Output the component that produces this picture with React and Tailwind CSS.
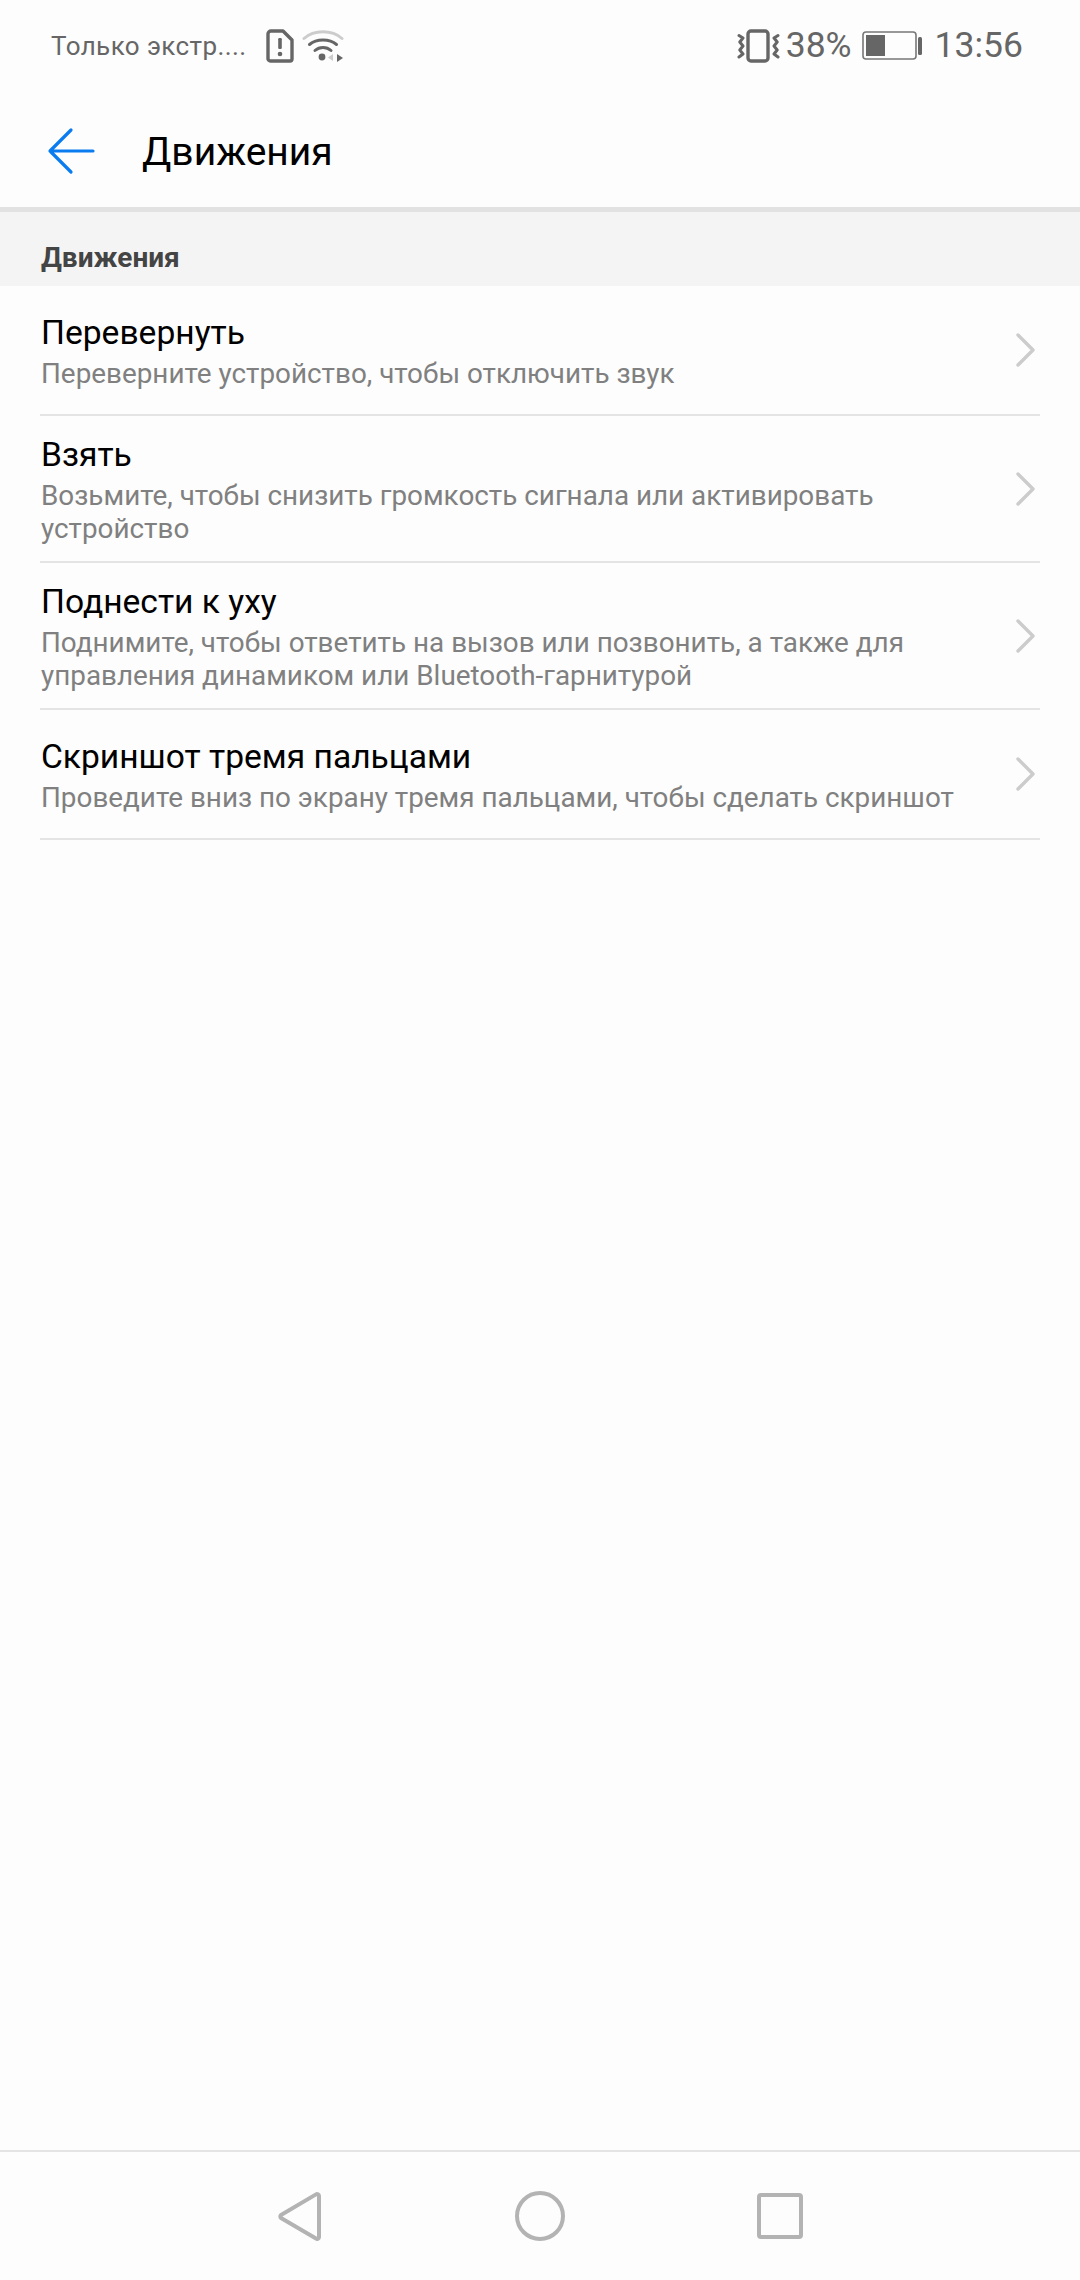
import React from "react";

const rows = [
  { title: "Перевернуть", sub: ["Переверните устройство, чтобы отключить звук"], h: "h-[130px]" },
  { title: "Взять", sub: ["Возьмите, чтобы снизить громкость сигнала или активировать", "устройство"], h: "h-[147px]" },
  { title: "Поднести к уху", sub: ["Поднимите, чтобы ответить на вызов или позвонить, а также для", "управления динамиком или Bluetooth-гарнитурой"], h: "h-[147px]" },
  { title: "Скриншот тремя пальцами", sub: ["Проведите вниз по экрану тремя пальцами, чтобы сделать скриншот"], h: "h-[130px]" },
];

function SimAlert() {
  return (
    <svg width="28" height="34" viewBox="0 0 28 34" className="block">
      <path d="M5 2h12l9 9v19a2 2 0 0 1-2 2H5a3 3 0 0 1-3-2V5a3 3 0 0 1 3-3z" fill="none" stroke="#666" strokeWidth="3.4" strokeLinejoin="round" />
      <rect x="12.2" y="9" width="3.6" height="11" rx="1.2" fill="#666" />
      <circle cx="14" cy="25" r="2.3" fill="#666" />
    </svg>
  );
}

function Wifi() {
  return (
    <svg width="42" height="34" viewBox="0 0 42 34" className="block">
      <path d="M2 9.5C12 0.5 30 0.5 40 9.5" fill="none" stroke="#ccc" strokeWidth="3" strokeLinecap="round" />
      <path d="M7.5 15.5C14.5 9.5 27.5 9.5 34.5 15.5" fill="none" stroke="#666" strokeWidth="3" strokeLinecap="round" />
      <path d="M13 21.5C17.5 17.5 24.5 17.5 29 21.5" fill="none" stroke="#666" strokeWidth="3" strokeLinecap="round" />
      <circle cx="20" cy="28" r="3.4" fill="#666" />
      <path d="M31 25v7l-5-3.5z" fill="#ccc" />
      <path d="M35 25v8l6-4z" fill="#666" />
    </svg>
  );
}

function Vibrate() {
  return (
    <svg width="43" height="34" viewBox="0 0 43 34" className="block">
      <rect x="11" y="2" width="20" height="30" rx="3" fill="none" stroke="#666" strokeWidth="3.4" />
      <path d="M2 6.5l4 2.5-3.2 4 3.2 4-3.2 4 3.2 4-4 3" fill="none" stroke="#666" strokeWidth="3" strokeLinecap="round" strokeLinejoin="round" />
      <path d="M41 6.5l-4 2.5 3.2 4-3.2 4 3.2 4-3.2 4 4 3" fill="none" stroke="#666" strokeWidth="3" strokeLinecap="round" strokeLinejoin="round" />
    </svg>
  );
}

function Battery() {
  return (
    <svg width="60" height="30" viewBox="0 0 60 30" className="block">
      <rect x="1" y="1" width="53" height="27" rx="3" fill="none" stroke="#777" strokeWidth="1.6" />
      <rect x="4" y="4" width="19" height="21" fill="#666" />
      <rect x="56" y="6" width="4" height="18" rx="1.5" fill="#666" />
    </svg>
  );
}

function Chevron() {
  return (
    <svg width="20" height="34" viewBox="0 0 20 34" className="block shrink-0">
      <path d="M2 2l15 15L2 32" fill="none" stroke="#ccc" strokeWidth="3.4" strokeLinecap="round" strokeLinejoin="round" />
    </svg>
  );
}

export default function App() {
  return (
    <div className="w-[1080px] h-[2280px] flex flex-col bg-[#fdfdfd] font-['Roboto',sans-serif] overflow-hidden">
      <div className="h-[92px] shrink-0 flex items-center justify-between pl-[51px] pr-[57px] text-[#666]">
        <div className="flex items-center">
          <span className="text-[26px] tracking-[0.4px]">Только экстр....</span>
          <span className="ml-[20px]"><SimAlert /></span>
          <span className="ml-[8px]"><Wifi /></span>
        </div>
        <div className="flex items-center">
          <Vibrate />
          <span className="ml-[6px] text-[35.5px]">38%</span>
          <span className="ml-[10px]"><Battery /></span>
          <span className="ml-[13px] text-[35.5px]">13:56</span>
        </div>
      </div>

      <div className="h-[115px] shrink-0 flex items-center pl-[47px]">
        <svg width="48" height="48" viewBox="0 0 48 48" className="block mt-[2px]">
          <path d="M46 24H3M24 3L3 24l21 21" fill="none" stroke="#0a7cf0" strokeWidth="3.2" strokeLinecap="round" strokeLinejoin="round" />
        </svg>
        <h1 className="ml-[47px] mt-[5px] text-[39px] text-black">Движения</h1>
      </div>

      <div className="h-[5px] shrink-0 bg-[#e2e2e2]" />
      <div className="h-[74px] shrink-0 bg-[#f4f4f4] pl-[41px] pt-[29px] text-[28px] leading-[34px] font-bold text-[#444]">Движения</div>

      <div className="mx-10">
        {rows.map(r => (
          <div key={r.title} className={`${r.h} flex items-center justify-between border-b-2 border-[#e4e4e4] pr-[4px]`}>
            <div className="pl-[1px] pt-[2px]">
              <div className="text-[33.6px] leading-[40px] text-black">{r.title}</div>
              <div className="mt-[4px] text-[27.85px] leading-[33px] text-[#808080]">
                {r.sub.map(s => <div key={s} className="whitespace-nowrap">{s}</div>)}
              </div>
            </div>
            <Chevron />
          </div>
        ))}
      </div>

      <div className="mt-auto h-[130px] shrink-0 border-t-2 border-[#e4e4e4] flex items-center justify-center">
        <svg width="43" height="49" viewBox="0 0 43 49" className="block mr-[194px]">
          <path d="M41 4v41a2 2 0 0 1-3 1.6L3 26a2 2 0 0 1 0-3L38 2.4A2 2 0 0 1 41 4z" fill="none" stroke="#b3b3b3" strokeWidth="4" strokeLinejoin="round" />
        </svg>
        <svg width="50" height="50" viewBox="0 0 50 50" className="block">
          <circle cx="25" cy="25" r="23" fill="none" stroke="#b3b3b3" strokeWidth="4" />
        </svg>
        <svg width="46" height="46" viewBox="0 0 46 46" className="block ml-[192px]">
          <rect x="2" y="2" width="42" height="42" rx="2" fill="none" stroke="#b3b3b3" strokeWidth="4" />
        </svg>
      </div>
    </div>
  );
}
